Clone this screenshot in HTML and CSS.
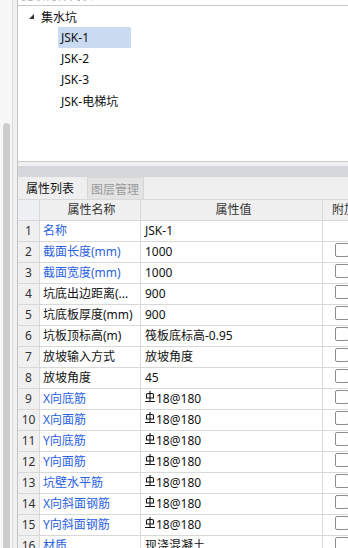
FILE: index.html
```html
<!DOCTYPE html>
<html lang="zh-CN">
<head>
    <meta charset="UTF-8">
    <title>集水坑属性</title>
    <link rel="stylesheet" href="styles.css">
</head>
<body>
<div class="window">
    <div class="rail"><div class="thumb"></div></div>
    <div class="gutter"></div>
    <div class="main">
        <div class="caption"><span>提取构件列表</span></div>

        <div class="tree">
            <div class="node root">
                <svg class="caret" width="5" height="5" viewBox="0 0 5 5"><polygon points="5,0 5,5 0,5" fill="#333"/></svg>
                <span>集水坑</span>
            </div>
            <div class="node leaf selected">JSK-1</div>
            <div class="node leaf">JSK-2</div>
            <div class="node leaf">JSK-3</div>
            <div class="node leaf">JSK-电梯坑</div>
        </div>

        <div class="split"></div>
        <div class="bar"></div>

        <div class="tabs">
            <span class="tab">属性列表</span>
            <span class="tab off">图层管理</span>
        </div>

        <div class="grid">
            <div class="row head">
                <div class="num"></div>
                <div class="name">属性名称</div>
                <div class="value">属性值</div>
                <div class="extra">附加</div>
            </div>
            <div class="row">
                <div class="num">1</div>
                <div class="name blue">名称</div>
                <div class="value">JSK-1</div>
                <div class="extra"></div>
            </div>
            <div class="row">
                <div class="num">2</div>
                <div class="name blue">截面长度(mm)</div>
                <div class="value">1000</div>
                <div class="extra"><span class="check"></span></div>
            </div>
            <div class="row">
                <div class="num">3</div>
                <div class="name blue">截面宽度(mm)</div>
                <div class="value">1000</div>
                <div class="extra"><span class="check"></span></div>
            </div>
            <div class="row">
                <div class="num">4</div>
                <div class="name">坑底出边距离(...</div>
                <div class="value">900</div>
                <div class="extra"><span class="check"></span></div>
            </div>
            <div class="row">
                <div class="num">5</div>
                <div class="name">坑底板厚度(mm)</div>
                <div class="value">900</div>
                <div class="extra"><span class="check"></span></div>
            </div>
            <div class="row">
                <div class="num">6</div>
                <div class="name">坑板顶标高(m)</div>
                <div class="value">筏板底标高-0.95</div>
                <div class="extra"><span class="check"></span></div>
            </div>
            <div class="row">
                <div class="num">7</div>
                <div class="name">放坡输入方式</div>
                <div class="value">放坡角度</div>
                <div class="extra"><span class="check"></span></div>
            </div>
            <div class="row">
                <div class="num">8</div>
                <div class="name">放坡角度</div>
                <div class="value">45</div>
                <div class="extra"><span class="check"></span></div>
            </div>
            <div class="row">
                <div class="num">9</div>
                <div class="name blue">X向底筋</div>
                <div class="value"><svg class="bar3" width="10" height="11" viewBox="0 0 10 11"><path d="M5 0V10.5M1.5 7V4Q1.5 2.5 3 2.5H7Q8.5 2.5 8.5 4V7ZM0 10.5H10" fill="none" stroke="#111" stroke-width="1.1"/></svg>18@180</div>
                <div class="extra"><span class="check"></span></div>
            </div>
            <div class="row">
                <div class="num">10</div>
                <div class="name blue">X向面筋</div>
                <div class="value"><svg class="bar3" width="10" height="11" viewBox="0 0 10 11"><path d="M5 0V10.5M1.5 7V4Q1.5 2.5 3 2.5H7Q8.5 2.5 8.5 4V7ZM0 10.5H10" fill="none" stroke="#111" stroke-width="1.1"/></svg>18@180</div>
                <div class="extra"><span class="check"></span></div>
            </div>
            <div class="row">
                <div class="num">11</div>
                <div class="name blue">Y向底筋</div>
                <div class="value"><svg class="bar3" width="10" height="11" viewBox="0 0 10 11"><path d="M5 0V10.5M1.5 7V4Q1.5 2.5 3 2.5H7Q8.5 2.5 8.5 4V7ZM0 10.5H10" fill="none" stroke="#111" stroke-width="1.1"/></svg>18@180</div>
                <div class="extra"><span class="check"></span></div>
            </div>
            <div class="row">
                <div class="num">12</div>
                <div class="name blue">Y向面筋</div>
                <div class="value"><svg class="bar3" width="10" height="11" viewBox="0 0 10 11"><path d="M5 0V10.5M1.5 7V4Q1.5 2.5 3 2.5H7Q8.5 2.5 8.5 4V7ZM0 10.5H10" fill="none" stroke="#111" stroke-width="1.1"/></svg>18@180</div>
                <div class="extra"><span class="check"></span></div>
            </div>
            <div class="row">
                <div class="num">13</div>
                <div class="name blue">坑壁水平筋</div>
                <div class="value"><svg class="bar3" width="10" height="11" viewBox="0 0 10 11"><path d="M5 0V10.5M1.5 7V4Q1.5 2.5 3 2.5H7Q8.5 2.5 8.5 4V7ZM0 10.5H10" fill="none" stroke="#111" stroke-width="1.1"/></svg>18@180</div>
                <div class="extra"><span class="check"></span></div>
            </div>
            <div class="row">
                <div class="num">14</div>
                <div class="name blue">X向斜面钢筋</div>
                <div class="value"><svg class="bar3" width="10" height="11" viewBox="0 0 10 11"><path d="M5 0V10.5M1.5 7V4Q1.5 2.5 3 2.5H7Q8.5 2.5 8.5 4V7ZM0 10.5H10" fill="none" stroke="#111" stroke-width="1.1"/></svg>18@180</div>
                <div class="extra"><span class="check"></span></div>
            </div>
            <div class="row">
                <div class="num">15</div>
                <div class="name blue">Y向斜面钢筋</div>
                <div class="value"><svg class="bar3" width="10" height="11" viewBox="0 0 10 11"><path d="M5 0V10.5M1.5 7V4Q1.5 2.5 3 2.5H7Q8.5 2.5 8.5 4V7ZM0 10.5H10" fill="none" stroke="#111" stroke-width="1.1"/></svg>18@180</div>
                <div class="extra"><span class="check"></span></div>
            </div>
            <div class="row">
                <div class="num">16</div>
                <div class="name blue">材质</div>
                <div class="value">现浇混凝土</div>
                <div class="extra"><span class="check"></span></div>
            </div>
        </div>
    </div>
</div>
</body>
</html>
```

FILE: styles.css
```css
* {
    box-sizing: border-box;
}

html, body {
    margin: 0;
    padding: 0;
    height: 100%;
    overflow: hidden;
}

body {
    font-family: "Noto Sans", "Noto Sans CJK SC", sans-serif;
    font-size: 12px;
    color: #111;
    background-color: #f0f0f0;
}

.window {
    display: flex;
    width: 348px;
    height: 548px;
    overflow: hidden;
}

/* left scroll rail */
.rail {
    flex: none;
    width: 13px;
    border-right: 1px solid #dadada;
    background-color: #f7f7f7;
}

.thumb {
    margin: 123px 0 0 3px;
    width: 7px;
    height: 425px;
    background-color: #cdcdcd;
    border-radius: 4px 4px 0 0;
}

.gutter {
    flex: none;
    width: 4px;
    background-color: #f0f0f0;
}

.main {
    flex: 1;
    min-width: 0;
    border-left: 1px solid #c4c4c4;
}

.caption {
    height: 6px;
    overflow: hidden;
    background-color: #fff;
    border-bottom: 1px solid #c8c8c8;
}

.caption span {
    display: block;
    margin-top: -12px;
    padding-left: 3px;
    color: #aaa;
    line-height: 16px;
    white-space: nowrap;
}

/* component tree */
.tree {
    height: 156px;
    background-color: #fff;
    border-bottom: 1px solid #c8c8c8;
}

.node {
    display: flex;
    align-items: center;
    height: 21px;
    white-space: nowrap;
}

.root {
    padding-left: 11px;
}

.caret {
    margin-right: 7px;
}

.leaf {
    margin-left: 40px;
    width: 73px;
    padding-left: 3px;
}

.selected {
    background-color: #c9daf1;
}

.split {
    height: 4px;
    background-color: #f0f0f0;
}

.bar {
    height: 11px;
    background-color: #d5d7dc;
}

/* tabs */
.tabs {
    display: flex;
    height: 22px;
    background-color: #efefef;
}

.tab {
    display: flex;
    align-items: center;
    padding: 0 8px;
    white-space: nowrap;
}

.tab.off {
    margin-left: 5px;
    padding: 0 4px 0 3px;
    color: #9a9a9a;
    background-color: #e3e3e3;
    border: 1px solid #d6d6d6;
    border-bottom: none;
}

/* property grid */
.grid {
    background-color: #fff;
}

.row {
    display: grid;
    grid-template-columns: 22px 101px 182px 60px;
    height: 21px;
    border-bottom: 1px solid #d8d8d8;
}

.row > div {
    border-right: 1px solid #d8d8d8;
    line-height: 20px;
    overflow: hidden;
    white-space: nowrap;
}

.head {
    height: 22px;
    border-top: 1px solid #d8d8d8;
    background-color: #f0f0f0;
}

.head > div {
    text-align: center;
    color: #333;
}

.head .num {
    background-color: #eef0f3;
}

.head .extra {
    text-align: left;
    padding-left: 9px;
}

.num {
    text-align: center;
    color: #333;
    background-color: #f0f0f0;
}

.name {
    padding-left: 3px;
}

.value {
    padding-left: 4px;
}

.blue {
    color: #2a5fe0;
}

.bar3 {
    vertical-align: 1px;
    margin-right: 1px;
}

.check {
    display: block;
    margin: 1px 0 0 12px;
    width: 14px;
    height: 14px;
    border: 1px solid #8c8c8c;
    border-radius: 2px;
    background-color: #fff;
}
```
